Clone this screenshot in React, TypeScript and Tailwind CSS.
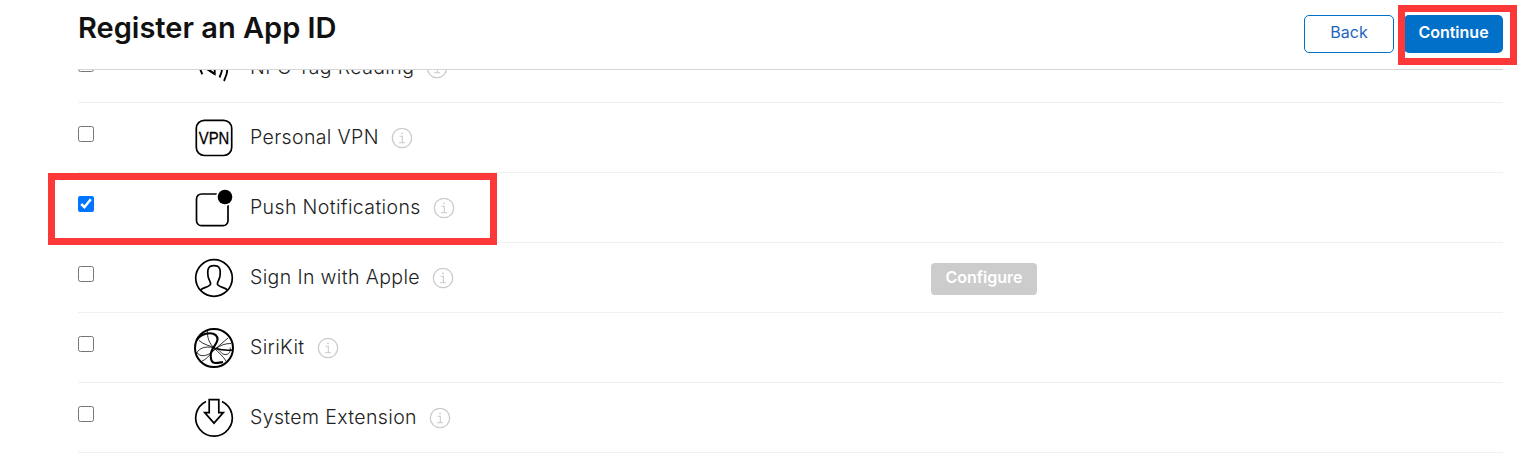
import { ReactNode, useState } from "react";

type Capability = {
  id: string;
  name: string;
  icon: ReactNode;
  configurable?: boolean;
};

function Glyph({ children }: { children: ReactNode }) {
  return (
    <svg
      viewBox="0 0 40 40"
      fill="none"
      stroke="#000"
      strokeWidth="1.7"
      className="size-10 shrink-0 overflow-visible"
      aria-hidden="true"
    >
      {children}
    </svg>
  );
}

const capabilities: Capability[] = [
  {
    id: "nfc",
    name: "NFC Tag Reading",
    icon: (
      <Glyph>
        <g strokeWidth="1.9">
          <path d="M7 9C4.500 14 5 20 8.300 26.300" />
          <path d="M13.500 12v9.500l7.200 4.500V12" />
          <path d="M14.500 21.500l6.200 4.500" />
          <path d="M26.500 9C29.500 15 29 22 25.500 29.500" />
          <path d="M31 6C35 15 34.500 24 30 33" />
        </g>
      </Glyph>
    ),
  },
  {
    id: "vpn",
    name: "Personal VPN",
    icon: (
      <Glyph>
        <rect x="2.300" y="2.300" width="35.400" height="35.200" rx="8" />
        <text
          x="4.800"
          y="25.900"
          fill="#000"
          stroke="#000"
          strokeWidth="0.3"
          className="font-['Liberation_Sans',sans-serif] text-[16px]"
          textLength="30.500"
          lengthAdjust="spacingAndGlyphs"
        >
          VPN
        </text>
      </Glyph>
    ),
  },
  {
    id: "push",
    name: "Push Notifications",
    icon: (
      <Glyph>
        <rect x="2.500" y="6" width="31.500" height="31.700" rx="5" />
        <circle cx="31" cy="9" r="8.900" fill="#fff" stroke="none" />
        <circle cx="31" cy="9" r="7.300" fill="#000" stroke="none" />
      </Glyph>
    ),
  },
  {
    id: "siwa",
    name: "Sign In with Apple",
    configurable: true,
    icon: (
      <Glyph>
        <circle cx="20" cy="20" r="18.300" />
        <path d="M6.500 32.200C8.500 29.500 15.500 29 16.500 26.200C17 24 14.900 22 14.200 19C13 11.500 14 7.700 20 7.700S27 11.500 25.800 19C25.100 22 23 24 23.500 26.200C24.500 29 31.500 29.500 33.500 32.200" />
      </Glyph>
    ),
  },
  {
    id: "sirikit",
    name: "SiriKit",
    icon: (
      <Glyph>
        <circle cx="20" cy="20" r="19" strokeWidth="2" />
        <path
          d="M2.500 12.500C6 7 11 5.300 16 5.300C21 5.300 23.700 8 23.500 11.500C23.300 16 17.500 20 16.800 26C16.300 31 17.500 35 21.500 35C24 35 26 34.500 29 34"
          strokeWidth="2.100"
        />
        <path d="M22 20.500C27 22 32 22.500 38.500 22" strokeWidth="1.500" />
        <g strokeWidth="0.8">
          <path d="M13.500 2.500C13 9 15 15 20 20C25 25 29 28 32 33" />
          <path d="M5 12.500C10 17 16 17.500 22 20.500" />
          <path d="M2 26C6 18 15 18 22 20.500C28 23 26 26.500 32 26.500C36 26.500 37 21 36 19.500" />
          <path d="M2.500 24C6 30 14 28 19 23C24 18.500 30 13.500 34 10" />
          <path d="M8 33C14 31 17 24 22 20.500C27 17 31 15.500 37 15.500" />
        </g>
      </Glyph>
    ),
  },
  {
    id: "system-extension",
    name: "System Extension",
    icon: (
      <Glyph>
        <path d="M12 3.400A18.300 18.300 0 1 0 28 3.400" />
        <path d="M15.200 1.600h9.600v13h4.500L20 25.100L10.700 14.600h4.500z" />
      </Glyph>
    ),
  },
];

function InfoIcon() {
  return (
    <svg
      viewBox="0 0 22 22"
      fill="none"
      stroke="#cbcbcb"
      strokeWidth="1.3"
      className="ml-3 size-[22px]"
      aria-hidden="true"
    >
      <circle cx="11" cy="11" r="9.700" />
      <path d="M8.500 9.200h2.800v6.500M8 15.700h6" strokeWidth="1.1" />
      <circle cx="11" cy="6.300" r="0.900" fill="#cbcbcb" stroke="none" />
    </svg>
  );
}

export default function App() {
  const [selected, setSelected] = useState<string[]>(["push"]);

  const toggle = (id: string) => {
    setSelected((current) =>
      current.includes(id) ? current.filter((item) => item !== id) : [...current, id]
    );
  };

  return (
    <main className="relative h-[468px] overflow-hidden bg-white pr-[30px] pl-[78px] font-[Inter,sans-serif]">
      <header className="relative z-10 flex h-[70px] items-start justify-between border-b border-[#d6d6d6] bg-white">
        <h1 className="mt-2 text-[29px] leading-10 font-semibold text-[#111]">
          Register an App ID
        </h1>
        <div className="mt-[15px] flex gap-2.5">
          <button className="h-[38px] w-[90px] rounded-[5px] border border-[#0070c9] pb-[5px] text-base text-[#1d66bd]">
            Back
          </button>
          <button className="h-[38px] w-[99px] rounded-[5px] bg-[#0070c9] pb-[5px] text-base font-semibold text-white">
            Continue
          </button>
        </div>
      </header>

      <ul className="-mt-[37px]">
        {capabilities.map((item) => (
          <li key={item.id} className="flex h-[70px] items-start border-b border-[#f0f0f0]">
            <div className="w-[116px] pt-[23px]">
              <input
                type="checkbox"
                aria-label={item.name}
                checked={selected.includes(item.id)}
                onChange={() => toggle(item.id)}
                className="block size-4"
              />
            </div>
            <div className="flex w-[737px] items-center pt-[15px]">
              {item.icon}
              <span className="-mt-0.5 ml-4 text-[19.5px] leading-[38px] font-light tracking-[0.37px] text-[#222]">
                {item.name}
              </span>
              <InfoIcon />
            </div>
            {item.configurable ? (
              <button className="mt-5 h-8 w-[106px] rounded bg-[#ccc] pb-[5px] text-base font-semibold text-white">
                Configure
              </button>
            ) : null}
          </li>
        ))}
      </ul>

      <div className="pointer-events-none absolute top-[173px] left-[48px] z-20 h-[72px] w-[449px] border-7 border-[#fc3838]" />
      <div className="pointer-events-none absolute top-[5px] left-[1398px] z-20 h-[60px] w-[119px] border-7 border-[#fc3838]" />
    </main>
  );
}
